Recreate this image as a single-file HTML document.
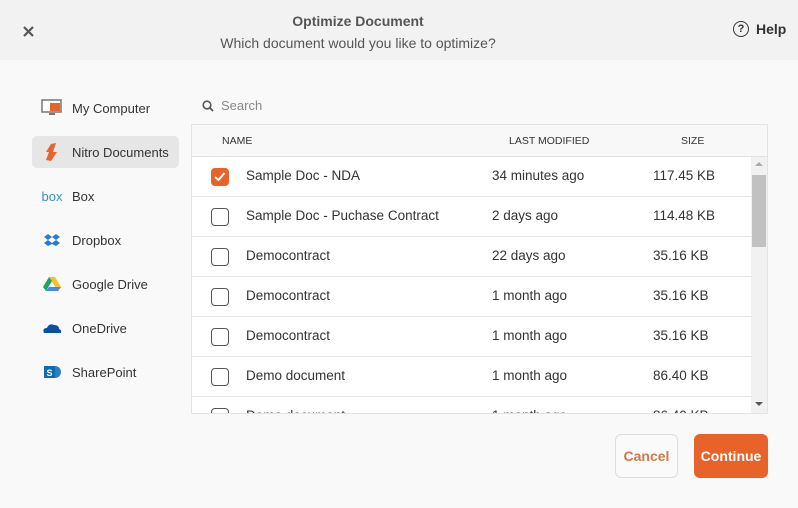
<!DOCTYPE html>
<html><head><meta charset="utf-8"><style>
*{margin:0;padding:0;box-sizing:border-box}
body{width:798px;height:508px;background:#f9f9f9;font-family:"Liberation Sans",sans-serif;position:relative;overflow:hidden;color:#333}
.hdr{position:absolute;left:0;top:0;width:798px;height:60px;background:#f2f2f2}
.t1{position:absolute;top:13px;left:0;width:716px;text-align:center;font-size:14px;font-weight:bold;color:#555}
.t2{position:absolute;top:35px;left:0;width:716px;text-align:center;font-size:14px;color:#555}
.x{position:absolute;left:23px;top:24px}
.help{position:absolute;left:733px;top:21px;font-size:14px;font-weight:bold;color:#333;display:flex;align-items:center}
.help span.c{width:16px;height:16px;border:1.5px solid #333;border-radius:50%;font-size:11px;display:inline-flex;align-items:center;justify-content:center;margin-right:7px}
.side{position:absolute;left:32px;top:92px}
.it{position:absolute;left:0;width:147px;height:32px;border-radius:5px;display:flex;align-items:center;font-size:13px;color:#333}
.it.sel{background:#e6e6e6}
.it .ic{width:40px;display:flex;justify-content:center;align-items:center}
.search{position:absolute;left:202px;top:98px;font-size:13px;color:#888;display:flex;align-items:center}
.tbl{position:absolute;left:191px;top:124px;width:577px;height:290px;border:1px solid #e3e3e3;background:#fff;overflow:hidden}
.th{height:32px;background:#f8f8f8;border-bottom:1px solid #e3e3e3;position:relative;font-size:10.5px;color:#333}
.th span{position:absolute;top:10px}
.row{height:40px;border-bottom:1px solid #e6e6e6;position:relative;font-size:13.5px;color:#333}
.row span{position:absolute;top:11px}
.cb{position:absolute;left:19px;top:11px;width:18px;height:18px;border:1.5px solid #555;border-radius:4px}
.cb.on{background:#e8632a;border-color:#e8632a}
.sb{position:absolute;left:559px;top:32px;width:17px;height:258px;background:#f1f1f1}
.thumb{position:absolute;left:1px;top:18px;width:14px;height:72px;background:#c1c1c1}
.btn{position:absolute;top:434px;height:44px;border-radius:6px;font-size:14px;font-weight:bold;display:flex;align-items:center;justify-content:center}
</style></head><body>
<div class="hdr">
<div class="x"><svg width="11" height="11"><path d="M1 1 L10 10 M10 1 L1 10" stroke="#555" stroke-width="2.2"/></svg></div>
<div class="t1">Optimize Document</div>
<div class="t2">Which document would you like to optimize?</div>
<div class="help"><span class="c">?</span>Help</div>
</div>
<div class="side">
<div class="it" style="top:0"><div class="ic"><svg width="22" height="18"><rect x="1" y="1" width="19" height="12" fill="#fff" stroke="#777" stroke-width="1.5"/><rect x="9" y="4" width="10" height="8" fill="#e8632a"/><rect x="8" y="14" width="6" height="2" fill="#777"/></svg></div>My Computer</div>
<div class="it sel" style="top:44px"><div class="ic"><svg width="14" height="20"><path d="M6 2 L11 1 L8 10 L12 10 L6 19 L1 18 L4 10 L1 10 Z" fill="#e8632a"/></svg></div>Nitro Documents</div>
<div class="it" style="top:88px"><div class="ic" style="color:#3b8fc4;font-size:13px">box</div>Box</div>
<div class="it" style="top:132px"><div class="ic"><svg width="16" height="14"><path d="M4 1 L8 4 L4 7 L0 4Z M12 1 L16 4 L12 7 L8 4Z M4 7 L8 10 L12 7 L16 10 L12 13 L8 11 L4 13 L0 10Z" fill="#2a7ad0"/></svg></div>Dropbox</div>
<div class="it" style="top:176px"><div class="ic"><svg width="18" height="16"><path d="M6 1 L12 1 L18 11 L15 15Z" fill="#f5c12d"/><path d="M6 1 L0 11 L3 15 L9 5Z" fill="#1fa463"/><path d="M3 15 L15 15 L18 11 L6 11Z" fill="#4687f4"/></svg></div>Google Drive</div>
<div class="it" style="top:220px"><div class="ic"><svg width="20" height="12"><path d="M2 11 Q0 6 5 6 Q7 1 12 3 Q17 3 17 7 Q20 8 19 11Z" fill="#0d4fa4"/></svg></div>OneDrive</div>
<div class="it" style="top:264px"><div class="ic"><svg width="18" height="18"><circle cx="12" cy="9" r="6" fill="#2a7fc4"/><rect x="1" y="3" width="11" height="12" fill="#0e6cb0"/><text x="3.5" y="13" font-size="9" fill="#fff" font-family="Liberation Sans" font-weight="bold">S</text></svg></div>SharePoint</div>
</div>
<div class="search"><svg width="12" height="12" style="margin-right:7px"><circle cx="5" cy="5" r="3.8" fill="none" stroke="#555" stroke-width="1.6"/><path d="M8 8 L11 11" stroke="#555" stroke-width="1.8"/></svg>Search</div>
<div class="tbl">
<div class="th"><span style="left:30px">NAME</span><span style="left:317px">LAST MODIFIED</span><span style="left:489px">SIZE</span></div>
<div class="row"><div class="cb on"><svg width="15" height="15"><path d="M3 8 L6.5 11 L12.5 4" stroke="#fff" stroke-width="2" fill="none"/></svg></div><span style="left:54px">Sample Doc - NDA</span><span style="left:300px">34 minutes ago</span><span style="left:461px">117.45 KB</span></div>
<div class="row"><div class="cb"></div><span style="left:54px">Sample Doc - Puchase Contract</span><span style="left:300px">2 days ago</span><span style="left:461px">114.48 KB</span></div>
<div class="row"><div class="cb"></div><span style="left:54px">Democontract</span><span style="left:300px">22 days ago</span><span style="left:461px">35.16 KB</span></div>
<div class="row"><div class="cb"></div><span style="left:54px">Democontract</span><span style="left:300px">1 month ago</span><span style="left:461px">35.16 KB</span></div>
<div class="row"><div class="cb"></div><span style="left:54px">Democontract</span><span style="left:300px">1 month ago</span><span style="left:461px">35.16 KB</span></div>
<div class="row"><div class="cb"></div><span style="left:54px">Demo document</span><span style="left:300px">1 month ago</span><span style="left:461px">86.40 KB</span></div>
<div class="row"><div class="cb"></div><span style="left:54px">Demo document</span><span style="left:300px">1 month ago</span><span style="left:461px">86.40 KB</span></div>
<div class="sb"><div style="position:absolute;left:4px;top:5px;border:4px solid transparent;border-bottom:4px solid #aaa;border-top:0"></div><div class="thumb"></div><div style="position:absolute;left:4px;top:245px;border:4px solid transparent;border-top:4px solid #555;border-bottom:0"></div></div>
</div>
<div class="btn" style="left:615px;width:63px;border:1px solid #ddd;background:#fafafa;color:#d0784a">Cancel</div>
<div class="btn" style="left:694px;width:74px;background:#e8632a;color:#fff">Continue</div>
</body></html>
